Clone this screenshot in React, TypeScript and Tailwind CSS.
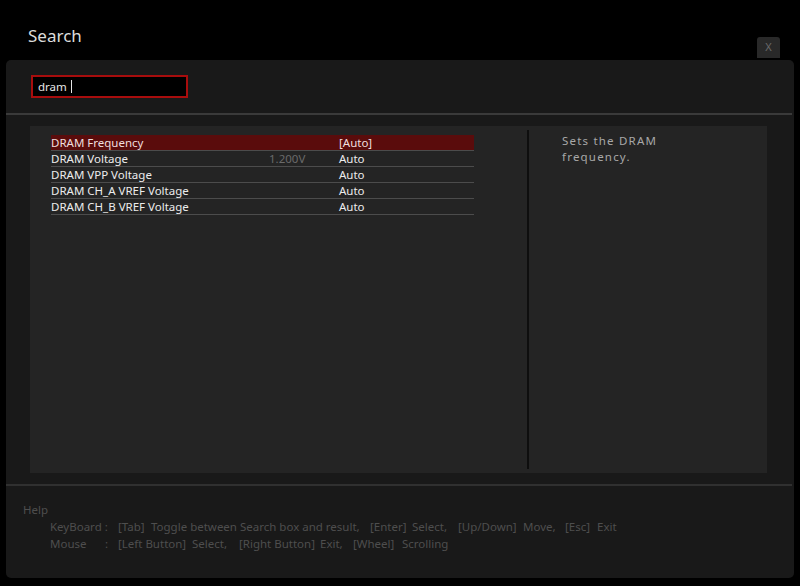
const rows = [
  { name: "DRAM Frequency", current: "", value: "[Auto]", active: true },
  { name: "DRAM Voltage", current: "1.200V", value: "Auto", active: false },
  { name: "DRAM VPP Voltage", current: "", value: "Auto", active: false },
  { name: "DRAM CH_A VREF Voltage", current: "", value: "Auto", active: false },
  { name: "DRAM CH_B VREF Voltage", current: "", value: "Auto", active: false },
];

// help lines: [text, width of the slot]
const keyboardHelp: [string, string][] = [
  ["KeyBoard :", "w-[68px]"],
  ["[Tab]", "w-[33px]"],
  ["Toggle between Search box and result,", "w-[219px]"],
  ["[Enter]", "w-[42px]"],
  ["Select,", "w-[46px]"],
  ["[Up/Down]", "w-[65px]"],
  ["Move,", "w-[42px]"],
  ["[Esc]", "w-[32px]"],
  ["Exit", ""],
];

const mouseHelp: [string, string][] = [
  ["Mouse", "w-[55px]"],
  [":", "w-[13px]"],
  ["[Left Button]", "w-[74px]"],
  ["Select,", "w-[47px]"],
  ["[Right Button]", "w-[81px]"],
  ["Exit,", "w-[33px]"],
  ["[Wheel]", "w-[49px]"],
  ["Scrolling", ""],
];

function HelpLine({ parts }: { parts: [string, string][] }) {
  return (
    <div className="flex whitespace-nowrap pl-[27px]">
      {parts.map(([text, w]) => (
        <span key={text} className={`shrink-0 ${w}`}>
          {text}
        </span>
      ))}
    </div>
  );
}

export default function App() {
  return (
    <div
      className="flex h-[586px] w-[800px] flex-col overflow-hidden bg-black"
      style={{ fontFamily: '"Noto Sans", "Open Sans", sans-serif' }}
    >
      <header className="flex h-[60px] shrink-0 items-start justify-between">
        <h1 className="ml-[28px] mt-[24px] text-[17px] leading-[24px] text-[#dcdcdc]">Search</h1>
        <button className="mr-[20px] mt-[37px] flex h-[21px] w-[23px] items-center justify-center rounded-t-[3px] bg-[#292929] text-[11px] text-[#6a6a6a]">
          X
        </button>
      </header>

      <main className="mx-[6px] flex h-[518px] w-[788px] flex-col rounded-[5px] bg-[#191919]">
        <div className="h-[53px] shrink-0 pl-[25px] pt-[15px]">
          <div className="flex h-[23px] w-[157px] items-center border-2 border-[#a80d0d] bg-black pl-[5px] text-[11.5px] text-[#e6e6e6]">
            dram <span className="ml-[4px] inline-block h-[13px] w-px bg-[#e6e6e6]" />
          </div>
        </div>
        <div className="mr-[2px] h-[2px] shrink-0 bg-[#3a3a3a]" />

        <section className="ml-[24px] mt-[11px] flex h-[347px] w-[737px] shrink-0 bg-[#242424]">
          <div className="w-[497px] shrink-0 pl-[21px] pt-[9px]">
            <div className="w-[423px]">
              {rows.map((r) => (
                <div
                  key={r.name}
                  className={`flex h-[16px] items-center border-b border-[#4c4c4c] text-[11.5px] leading-[15px] ${
                    r.active ? "bg-[#5a0c0c] text-[#f0dede]" : "text-[#ececec]"
                  }`}
                >
                  <span className="w-[218px] shrink-0">{r.name}</span>
                  <span className="w-[70px] shrink-0 text-[#6a6a6a]">{r.current}</span>
                  <span>{r.value}</span>
                </div>
              ))}
            </div>
          </div>
          <div className="my-[4px] w-[2px] shrink-0 bg-[#0e0e0e]" />
          <p className="ml-[33px] mt-[7px] w-[130px] text-[11.5px] leading-[16px] tracking-[1.2px] text-[#a8a8a8]">
            Sets the DRAM frequency.
          </p>
        </section>

        <div className="mr-[2px] mt-[11px] h-[2px] shrink-0 bg-[#303030]" />

        <footer className="pl-[17px] pt-[15px] text-[11.5px] leading-[17px] text-[#4e4e4e]">
          <div>Help</div>
          <HelpLine parts={keyboardHelp} />
          <HelpLine parts={mouseHelp} />
        </footer>
      </main>
    </div>
  );
}
